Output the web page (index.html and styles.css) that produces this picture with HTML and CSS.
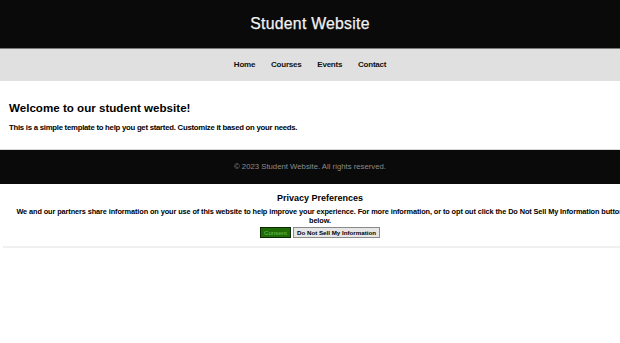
FILE: index.html
```html
<!DOCTYPE html>
<html lang="en">
<head>
<meta charset="utf-8">
<title>Student Website</title>
<link rel="stylesheet" href="styles.css">
</head>
<body>
<header class="site-header">
  <h1 class="site-title">Student Website</h1>
</header>
<nav class="site-nav">
  <a href="#">Home</a>
  <a href="#">Courses</a>
  <a href="#">Events</a>
  <a href="#">Contact</a>
</nav>
<main class="content">
  <h2 class="welcome">Welcome to our student website!</h2>
  <p class="intro">This is a simple template to help you get started. Customize it based on your needs.</p>
</main>
<footer class="site-footer">
  <p>© 2023 Student Website. All rights reserved.</p>
</footer>
<section class="privacy">
  <h3 class="privacy-title">Privacy Preferences</h3>
  <p class="privacy-text">We and our partners share information on your use of this website to help improve your experience. For more information, or to opt out click the Do Not Sell My Information button below.</p>
  <div class="privacy-buttons">
    <button class="btn btn-consent">Consent</button>
    <button class="btn btn-optout">Do Not Sell My Information</button>
  </div>
</section>
<div class="privacy-edge"></div>
</body>
</html>
```
FILE: styles.css
```css
html, body {
  margin: 0;
  padding: 0;
  background: #ffffff;
  font-family: "Liberation Sans", Arial, sans-serif;
  overflow: hidden;
}

.site-header {
  height: 48px;
  background: #0a0a0a;
  display: flex;
  align-items: center;
  justify-content: center;
  border-bottom: 1px solid #7a7a7a;
}

.site-title {
  margin: 0;
  color: #f2f2f2;
  font-size: 15.8px;
  font-weight: normal;
  letter-spacing: 0.25px;
  -webkit-text-stroke: 0.25px #f2f2f2;
}

.site-nav {
  height: 32px;
  background: #e0e0e0;
  display: flex;
  align-items: center;
  justify-content: center;
  gap: 16px;
}

.site-nav a {
  color: #111;
  text-decoration: none;
  font-size: 8px;
  font-weight: bold;
  letter-spacing: -0.25px;
  margin-top: -1px;
}

.content {
  padding: 20px 9px 12px;
  height: 36px;
}

.welcome {
  margin: 0 0 8px;
  font-size: 11.6px;
  font-weight: bold;
  color: #000;
  line-height: 14px;
}

.intro {
  margin: 0;
  font-size: 7.75px;
  font-weight: bold;
  color: #000;
  letter-spacing: -0.25px;
}

.site-footer {
  height: 34px;
  background: #0a0a0a;
  display: flex;
  align-items: center;
  justify-content: center;
  border-top: 1px solid #d8d8d8;
}

.site-footer p {
  margin: 0 0 2px;
  color: #8a8a8a;
  font-size: 7.75px;
}

.privacy {
  width: 100%;
  padding: 9px 10px 0;
  text-align: center;
  color: #000;
}

.privacy-title {
  margin: 0 0 3px;
  font-size: 9px;
  font-weight: bold;
  line-height: 11px;
}

.privacy-text {
  margin: 0 0 2px;
  font-size: 7.35px;
  font-weight: bold;
  line-height: 9px;
  letter-spacing: -0.1px;
}

.privacy-buttons {
  display: flex;
  justify-content: center;
  gap: 2px;
}

.btn {
  font-family: "Liberation Sans", Arial, sans-serif;
  font-size: 6.2px;
  height: 11px;
  padding: 0 3px;
  line-height: 9px;
  margin: 0;
}

.btn-consent {
  background: #1e6b08;
  color: #6fbf4f;
  border: 1px solid #0b2a02;
}

.btn-optout {
  background: #e6e6e6;
  color: #000;
  font-weight: bold;
  border: 1px solid #8a8a8a;
}

.privacy-edge {
  margin: 8px 0 0 3px;
  height: 2px;
  background: #f0f0f0;
}
```
